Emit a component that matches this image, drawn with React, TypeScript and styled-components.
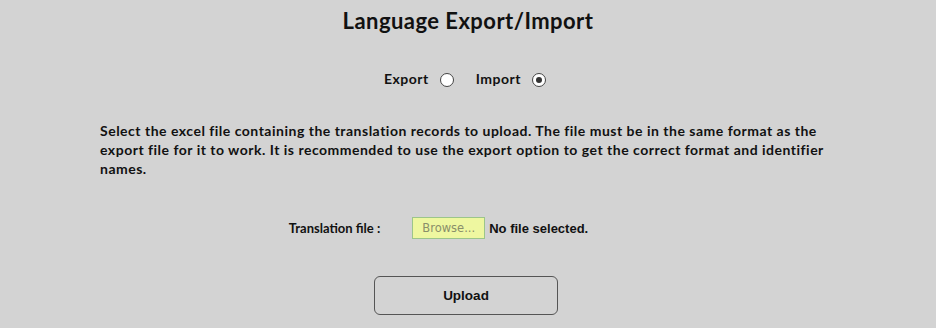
import React, { FC, useState } from 'react';
import styled, { createGlobalStyle } from 'styled-components';

const GlobalStyle = createGlobalStyle`
    body{
        margin: 0;
        background-color: #d3d3d3;
        font-family: Lato, "Open Sans", sans-serif;
        color: #111;
    }
`;

const Page = styled.div`
    width: 936px;
    height: 328px;
    box-sizing: border-box;
    padding: 8px 100px 0 100px;
    display: flex;
    flex-direction: column;
    align-items: center;
`;

const Title = styled.h1`
    margin: 0;
    font-size: 22px;
    font-weight: 700;
    letter-spacing: 0.45px;
    line-height: 26px;
`;

const ModeRow = styled.div`
    margin-top: 35px;
    margin-right: 6px;
    display: flex;
    align-items: center;
    gap: 22px;
    font-size: 14px;
    font-weight: 700;
    letter-spacing: 0.5px;
`;

const ModeOption = styled.label`
    display: flex;
    align-items: center;
    gap: 11px;
    cursor: pointer;
`;

const Radio = styled.span<{ $checked: boolean }>`
    width: 12px;
    height: 12px;
    margin-top: 4px;
    border-radius: 50%;
    border: 1px solid #444;
    background-color: #fff;
    display: flex;
    align-items: center;
    justify-content: center;
    &::after{
        content: '';
        width: 6px;
        height: 6px;
        border-radius: 50%;
        background-color: #333;
        display: ${p => (p.$checked ? 'block' : 'none')};
    }
`;

const Description = styled.p`
    align-self: stretch;
    margin: 34px 0 0 0;
    font-size: 14px;
    font-weight: 700;
    letter-spacing: 0.5px;
    line-height: 19px;
`;

const FileRow = styled.div`
    margin-top: 39px;
    margin-right: 59px;
    display: flex;
    align-items: center;
    font-weight: 700;
`;

const FileLabel = styled.span`
    margin-right: 32px;
    font-size: 13px;
`;

const FileName = styled.span`
    font-family: "Liberation Sans", Arial, sans-serif;
    font-size: 13px;
`;

const BrowseButton = styled.button`
    height: 22px;
    width: 73px;
    padding: 0;
    margin-right: 4px;
    background-color: #eef7a0;
    border: 1px solid #9cc58a;
    color: #8a8f6a;
    font-family: "DejaVu Sans", sans-serif;
    font-size: 11.5px;
`;

const UploadButton = styled.button`
    margin-top: 37px;
    margin-right: 4px;
    width: 184px;
    height: 39px;
    background-color: #d3d3d3;
    border: 1px solid #555;
    border-radius: 6px;
    font-family: "Liberation Sans", Arial, sans-serif;
    font-size: 13.5px;
    font-weight: 700;
    color: #111;
`;

const App: FC = () => {
    const [mode, setMode] = useState<'export' | 'import'>('import');
    return (
        <>
            <GlobalStyle />
            <Page>
                <Title>Language Export/Import</Title>
                <ModeRow>
                    <ModeOption onClick={() => setMode('export')}>
                        Export <Radio $checked={mode === 'export'} />
                    </ModeOption>
                    <ModeOption onClick={() => setMode('import')}>
                        Import <Radio $checked={mode === 'import'} />
                    </ModeOption>
                </ModeRow>
                <Description>
                    Select the excel file containing the translation records to upload. The file must be in the same
                    format as the export file for it to work. It is recommended to use the export option to get the
                    correct format and identifier names.
                </Description>
                <FileRow>
                    <FileLabel>Translation file :</FileLabel>
                    <BrowseButton>Browse...</BrowseButton>
                    <FileName>No file selected.</FileName>
                </FileRow>
                <UploadButton>Upload</UploadButton>
            </Page>
        </>
    );
};

export default App;
